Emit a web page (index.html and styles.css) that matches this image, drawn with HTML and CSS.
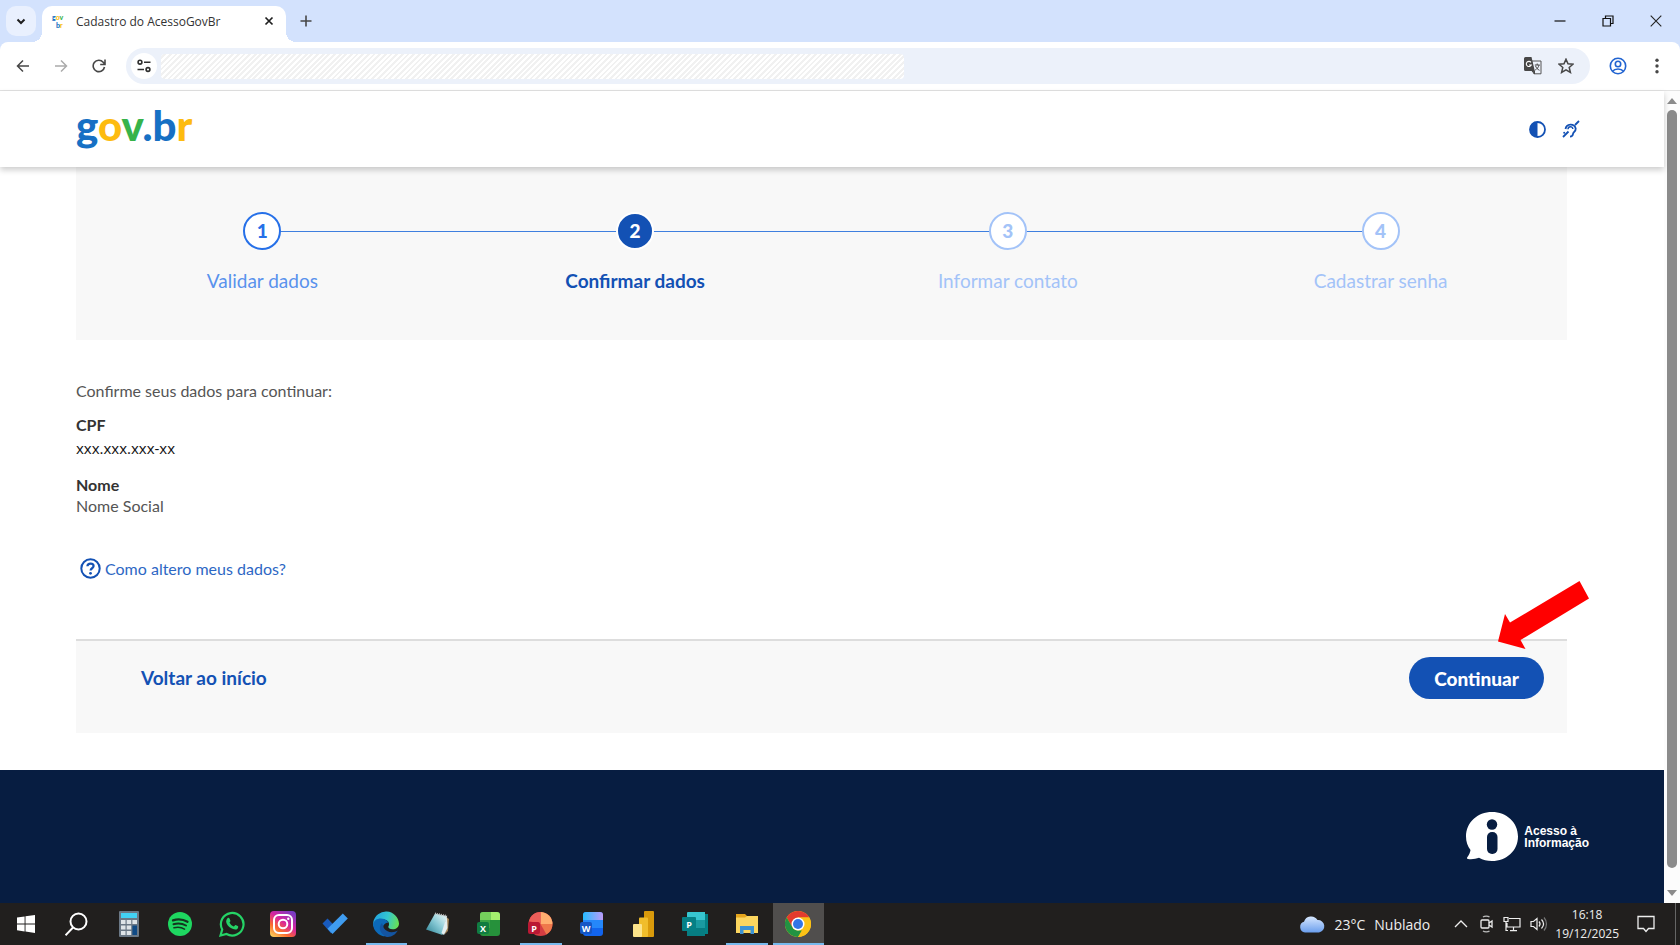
FILE: index.html
```html
<!DOCTYPE html>
<html lang="pt-BR">
<head>
  <meta charset="UTF-8">
  <meta name="viewport" content="width=device-width, initial-scale=1.0">
  <title>Cadastro do AcessoGovBr</title>
  <link rel="stylesheet" href="styles.css">
</head>
<body>
  <div class="browser">
    <div class="tab-strip">
      <button class="tab-search" aria-label="Pesquisar guias">
        <svg width="12" height="12" viewBox="0 0 12 12"><path d="M2.500 4.500 6 8l3.500-3.500" fill="none" stroke="#1f1f1f" stroke-width="2"/></svg>
      </button>
      <div class="tab">
        <svg class="favicon" width="16" height="20" viewBox="0 0 16 20" aria-hidden="true">
          <text x="1" y="9" class="fav-text"><tspan class="blue">g</tspan><tspan class="yellow">o</tspan><tspan class="green">v</tspan></text>
          <text x="5" y="17" class="fav-text"><tspan class="blue">b</tspan><tspan class="yellow">r</tspan></text>
        </svg>
        <span class="tab-title">Cadastro do AcessoGovBr</span>
        <button class="tab-close" aria-label="Fechar guia">
          <svg width="10" height="10" viewBox="0 0 10 10"><path d="M1.500 1.500l7 7M8.500 1.500l-7 7" stroke="#1f1f1f" stroke-width="1.700"/></svg>
        </button>
      </div>
      <button class="new-tab" aria-label="Nova guia">
        <svg width="12" height="12" viewBox="0 0 12 12"><path d="M6 .5v11M.5 6h11" stroke="#474747" stroke-width="1.600"/></svg>
      </button>
      <div class="window-controls">
        <button aria-label="Minimizar"><svg width="12" height="12" viewBox="0 0 12 12"><path d="M.5 6h11" stroke="#111" stroke-width="1.200"/></svg></button>
        <button aria-label="Restaurar"><svg width="12" height="12" viewBox="0 0 12 12"><path d="M1 3.500h7.500V11H1zM3.500 3.500V1H11v7.500H8.500" fill="none" stroke="#111" stroke-width="1.200"/></svg></button>
        <button aria-label="Fechar"><svg width="12" height="12" viewBox="0 0 12 12"><path d="M.7.700l10.600 10.600M11.300.700L.7 11.300" stroke="#222" stroke-width="1.100"/></svg></button>
      </div>
    </div>

    <div class="toolbar">
      <button class="nav-btn" aria-label="Voltar"><svg width="14" height="14" viewBox="0 0 14 14"><path d="M13 7H1.500M7 1.500 1.500 7 7 12.500" fill="none" stroke="#474747" stroke-width="1.500"/></svg></button>
      <button class="nav-btn" aria-label="Avançar"><svg width="14" height="14" viewBox="0 0 14 14"><path d="M1 7h11.500M7 1.500 12.500 7 7 12.500" fill="none" stroke="#ababab" stroke-width="1.500"/></svg></button>
      <button class="nav-btn" aria-label="Recarregar"><svg width="14" height="14" viewBox="0 0 14 14"><path d="M12.500 8A5.700 5.700 0 1 1 11.200 3.200L12.700 5M13 .5V5.500H8.200" fill="none" stroke="#474747" stroke-width="1.600"/></svg></button>
      <div class="omnibox">
        <button class="site-info" aria-label="Informações do site">
          <svg width="14" height="14" viewBox="0 0 14 14"><g fill="none" stroke="#303030" stroke-width="1.600"><circle cx="3" cy="3.200" r="1.900"/><path d="M7 3.200h6.500M.5 10.500H7"/><circle cx="11" cy="10.500" r="1.900"/></g></svg>
        </button>
        <input class="address" type="text" aria-label="Endereço" readonly>
        <button class="translate" aria-label="Traduzir">
          <svg width="18" height="18" viewBox="0 0 18 18">
            <path d="M7.500 4H17v12.800H10z" fill="#edf2fa" stroke="#555" stroke-width="1"/>
            <path d="M1.500 0h6l3.300 14H1.500A1.500 1.500 0 0 1 0 12.500v-11A1.500 1.500 0 0 1 1.500 0z" fill="#474747"/>
            <path d="M7 5.400A2.600 2.600 0 1 0 7.300 8H5" fill="none" stroke="#fff" stroke-width="1.100"/>
            <path d="M10.800 8h5M13.200 6.500V8M15 8c-.5 2.400-2 4-3.800 5M11.500 8.800c.7 2 2 3.500 4 4.500M8 14l2.500 3v-3z" fill="none" stroke="#474747" stroke-width="1"/>
          </svg>
        </button>
        <button class="star" aria-label="Favoritar">
          <svg width="16" height="16" viewBox="0 0 16 16"><path d="M8 1.200l2 4.600 5 .4-3.800 3.300 1.200 4.900L8 11.800l-4.400 2.600 1.200-4.900L1 6.200l5-.4z" fill="none" stroke="#474747" stroke-width="1.500"/></svg>
        </button>
      </div>
      <button class="profile" aria-label="Perfil">
        <svg width="18" height="18" viewBox="0 0 18 18"><g fill="none" stroke="#2264d1" stroke-width="1.600"><circle cx="9" cy="9" r="7.700"/><circle cx="9" cy="7" r="2.700"/><path d="M3.500 14.200c2.500-3 8.500-3 11 0"/></g></svg>
      </button>
      <button class="menu" aria-label="Menu">
        <svg width="4" height="16" viewBox="0 0 4 16" fill="#474747"><circle cx="2" cy="2.200" r="1.700"/><circle cx="2" cy="8" r="1.700"/><circle cx="2" cy="13.800" r="1.700"/></svg>
      </button>
    </div>
  </div>

  <div class="viewport">
    <div class="page">
      <header class="header">
        <a class="logo" href="#" aria-label="gov.br"><span class="blue">g</span><span class="yellow">o</span><span class="green">v</span><span class="blue">.b</span><span class="yellow">r</span></a>
        <div class="header-actions">
          <button aria-label="Alto contraste"><svg width="17" height="17" viewBox="0 0 17 17"><circle cx="8.500" cy="8.500" r="7.500" fill="#fff" stroke="#1351b4" stroke-width="1.800"/><path d="M8.500 1a7.500 7.500 0 0 0 0 15z" fill="#1351b4"/></svg></button>
          <button aria-label="Acessibilidade em Libras"><svg width="18" height="18" viewBox="0 0 18 18"><g fill="none" stroke="#1351b4" stroke-width="1.800"><path d="M1 17l5.500-5.500M13 5l4-4M3.500 9a5.200 5.200 0 0 1 10.200-.5c.2 3-2.400 3.500-2.700 5.500-.2 1.800-1.200 2.600-3 2.600"/><path d="M6 9.200c0-3.400 4.800-3.300 4.800-.3" stroke-width="1.500"/></g><circle cx="2.200" cy="12.800" r="1" fill="#1351b4"/></svg></button>
        </div>
      </header>

      <main class="content">
        <ol class="steps">
          <li class="step done"><span class="circle">1</span><span class="label">Validar dados</span></li>
          <li class="step active"><span class="circle">2</span><span class="label">Confirmar dados</span></li>
          <li class="step"><span class="circle">3</span><span class="label">Informar contato</span></li>
          <li class="step"><span class="circle">4</span><span class="label">Cadastrar senha</span></li>
        </ol>

        <div class="user-data">
          <p>Confirme seus dados para continuar:</p>
          <dl>
            <dt>CPF</dt>
            <dd class="cpf">xxx.xxx.xxx-xx</dd>
            <dt>Nome</dt>
            <dd>Nome Social</dd>
          </dl>
          <a class="help" href="#">
            <svg width="21" height="21" viewBox="0 0 21 21"><circle cx="10.500" cy="10.500" r="9.200" fill="none" stroke="#1351b4" stroke-width="2"/><path d="M7.400 8.300c.2-3.600 6.200-3.400 6.200-.2 0 2.200-3 2.100-3 4.500" fill="none" stroke="#1351b4" stroke-width="2.200"/><circle cx="10.500" cy="15.300" r="1.400" fill="#1351b4"/></svg>
            Como altero meus dados?
          </a>
        </div>

        <div class="actions">
          <a class="back-link" href="#">Voltar ao início</a>
          <button class="continue-btn">Continuar</button>
          <svg class="arrow" width="92" height="68" viewBox="0 0 92 68" aria-hidden="true"><path d="M0 60.500 7 33l5 8.500L81.500 0 91 17.500 22.500 59l5 9z" fill="#f00"/></svg>
        </div>
      </main>

      <footer class="footer">
        <a class="info-link" href="#">
          <svg width="52" height="50" viewBox="0 0 52 50"><path d="M26 0c14.500 0 26 10.500 26 24.500S40.500 49 26 49c-5 0-9-1-13-3.300-3 1.200-7 1.800-11 1.300-1-.1-1.300-1-.7-1.800C3 43 4.200 40.500 4.500 38 1.500 34 0 29.500 0 24.500 0 10.500 11.500 0 26 0z" fill="#fff"/><circle cx="26" cy="12.500" r="5.200" fill="#071d41"/><rect x="21" y="20" width="10.500" height="22" rx="5" fill="#071d41"/></svg>
          <span>Acesso à<br>Informação</span>
        </a>
      </footer>
    </div>
    <div class="scrollbar">
      <svg width="10" height="6" viewBox="0 0 10 6"><path d="M5 0l5 6H0z" fill="#8b8b8b"/></svg>
      <div class="thumb"></div>
      <svg width="10" height="6" viewBox="0 0 10 6"><path d="M5 6l5-6H0z" fill="#8b8b8b"/></svg>
    </div>
  </div>

  <div class="taskbar">
    <div class="apps">
      <button class="app" aria-label="Iniciar"><svg width="18" height="18" viewBox="0 0 18 18" fill="#fff"><path d="M0 2.600 7.600 1.500v7H0zM8.500 1.300 18 0v8.500H8.500zM0 9.400h7.600v7L0 15.300zM8.500 9.400H18V18l-9.500-1.400z"/></svg></button>
      <button class="app" aria-label="Pesquisar"><svg width="24" height="24" viewBox="0 0 24 24"><g fill="none" stroke="#fff" stroke-width="2"><circle cx="13.500" cy="9.500" r="8"/><path d="M8 15.500.5 23.300"/></g></svg></button>
      <button class="app" aria-label="Calculadora"><svg width="20" height="26" viewBox="0 0 20 26"><rect width="20" height="26" rx="1" fill="#6b7886"/><rect x="2" y="2" width="16" height="5" fill="#42d2f5"/><g fill="#dfe4e8"><path d="M2 9h4.500v4H2zM7.700 9h4.500v4H7.700zM13.400 9H18v4h-4.600zM2 14.500h4.500v4H2zM7.700 14.500h4.500v4H7.700zM2 20h4.500v4H2zM7.700 20h4.500v4H7.700z"/></g><path d="M13.400 14.500H18V24h-4.600z" fill="#104a85"/></svg></button>
      <button class="app" aria-label="Spotify"><svg width="24" height="24" viewBox="0 0 24 24"><circle cx="12" cy="12" r="12" fill="#1ed760"/><g fill="none" stroke="#14351f" stroke-linecap="round"><path d="M5 8.300c5-1.500 10.500-.8 14.500 1.500" stroke-width="2.300"/><path d="M5.500 12.200c4.500-1.300 9-.7 12.500 1.300" stroke-width="2"/><path d="M6 15.800c4-1 7.500-.5 10.500 1.300" stroke-width="1.600"/></g></svg></button>
      <button class="app" aria-label="WhatsApp"><svg width="26" height="26" viewBox="0 0 26 26"><path d="M1.500 24.500 3.200 18.500A11.300 11.300 0 1 1 7.500 23z" fill="#1f1f1c" stroke="#25d366" stroke-width="2.200"/><path d="M8.500 7.200c1-.8 1.800-.4 2.200.8l.7 1.700c.2.600-.8 1.400-.9 1.900.9 1.900 2.300 3.200 4.200 3.900.7-.3 1.200-1.600 1.900-1.500l2.200 1.100c.9.500.3 1.900-.3 2.600-1.500 1.500-4.300.8-6.600-.6-2.200-1.400-4.400-3.900-4.700-6.200-.1-1.400.4-2.900 1.300-3.700z" fill="#25d366"/></svg></button>
      <button class="app" aria-label="Instagram"><svg width="26" height="26" viewBox="0 0 26 26"><defs><linearGradient id="insta" x1=".1" y1="1" x2=".8" y2="0"><stop offset="0" stop-color="#ffd35b"/><stop offset=".3" stop-color="#fb6b2d"/><stop offset=".6" stop-color="#d6249f"/><stop offset="1" stop-color="#793cc4"/></linearGradient></defs><rect width="26" height="26" rx="4" fill="url(#insta)"/><g fill="none" stroke="#fff" stroke-width="2"><rect x="4" y="4" width="18" height="18" rx="5"/><circle cx="13" cy="13" r="4.300"/></g><circle cx="18.300" cy="7.800" r="1.200" fill="#fff"/></svg></button>
      <button class="app" aria-label="To Do"><svg width="26" height="22" viewBox="0 0 26 22"><path d="M.5 10.500 5.500 5.500l8.500 8.800-5 6z" fill="#185abd"/><path d="M5.500 15.800 20.800.5l5 5L10.500 21z" fill="#3f9cf0"/></svg></button>
      <button class="app running" aria-label="Edge"><svg width="26" height="26" viewBox="0 0 26 26"><defs><linearGradient id="edge" x1="0" y1=".5" x2="1" y2=".7"><stop offset="0" stop-color="#22a5e0"/><stop offset=".5" stop-color="#34c6cf"/><stop offset="1" stop-color="#6be04c"/></linearGradient></defs><path d="M.3 11A13 13 0 0 1 26 12.500c0 3.800-3 5.800-6.300 5.800-3.300 0-4.700-1.300-4.300-2.700 1.800-3.200-.3-7-5.200-7C5.500 8.600 2 11 .3 16z" fill="url(#edge)"/><path d="M.1 14.500C.5 7.500 7 6.500 11.200 8c2 .8 3.500 2 4.200 3.500-4 .3-6 3.200-5.200 6.500 1 4.300 5.500 6.300 9.500 5.400A13 13 0 0 1 .1 14.500z" fill="#0c69b8"/><path d="M9 12c-4.500 4.500-1.500 11.500 4.800 14 5 .2 8.700-2.400 11-6.500-5 3-11.500 1.800-14-2.500z" fill="#1454a0"/></svg></button>
      <button class="app" aria-label="Bloco de notas"><svg width="26" height="24" viewBox="0 0 26 24"><defs><linearGradient id="note" x1="1" y1="0" x2="0" y2="1"><stop offset="0" stop-color="#f4fbfc"/><stop offset=".5" stop-color="#84c7d3"/><stop offset="1" stop-color="#297f91"/></linearGradient></defs><path d="M21 5l3 2-1 12-3 3z" fill="#a18054"/><path d="M10 1.500 22 4l-4.500 19L1 17.500z" fill="url(#note)"/><path d="M22 4l-5.500 17 2.500 2 3.500-7z" fill="#e4eef0"/><path d="M10 1.500 22 4" stroke="#bbb" stroke-width="2" stroke-dasharray="1 1"/></svg></button>
      <button class="app" aria-label="Excel"><svg width="24" height="24" viewBox="0 0 24 24"><rect x="3" width="20" height="24" rx="3" fill="#26913b"/><path d="M6 0h8v8H3V3a3 3 0 0 1 3-3z" fill="#75cf5c"/><path d="M14 0h6a3 3 0 0 1 3 3v5h-9z" fill="#a4f06f"/><path d="M3 8h10v8H3z" fill="#39a346"/><rect x="0" y="10" width="12" height="12" rx="2" fill="#107c41"/><text x="6" y="19.500" class="app-letter">X</text></svg></button>
      <button class="app running" aria-label="PowerPoint"><svg width="26" height="24" viewBox="0 0 26 24"><circle cx="12.500" cy="12" r="12" fill="#d53d42"/><path d="M12.500 0a12 12 0 0 1 12 12h-12z" fill="#ffae70"/><path d="M24.500 12a12 12 0 0 1-6 10.400L12.500 12z" fill="#ef784b"/><path d="M1 9C3 3 7 0 12.500 0v12z" fill="#ec5e59"/><rect x="0" y="10" width="12" height="12" rx="2" fill="#ba1834"/><text x="6" y="19.500" class="app-letter">P</text></svg></button>
      <button class="app" aria-label="Word"><svg width="24" height="24" viewBox="0 0 24 24"><defs><linearGradient id="word"><stop offset="0" stop-color="#25bcff"/><stop offset="1" stop-color="#bd9bf7"/></linearGradient></defs><rect x="3" width="20" height="24" rx="3" fill="#1264ee"/><path d="M6 0h14a3 3 0 0 1 3 3v5H3V3a3 3 0 0 1 3-3z" fill="url(#word)"/><path d="M3 8h20v8H3z" fill="#2587fa"/><rect x="0" y="10" width="12" height="12" rx="2" fill="#1556c5"/><text x="6" y="19.500" class="app-letter">W</text></svg></button>
      <button class="app" aria-label="Power BI"><svg width="22" height="26" viewBox="0 0 22 26"><rect x="11" y="0" width="10" height="26" rx="1" fill="#d99a0b"/><rect x="6" y="6.500" width="9" height="19.500" rx="1" fill="#f0bd2b"/><rect x="0" y="13" width="9" height="13" rx="1" fill="#fce38a"/></svg></button>
      <button class="app" aria-label="Publisher"><svg width="26" height="24" viewBox="0 0 26 24"><path d="M20 2h6v20h-6z" fill="#038387"/><rect x="5" width="18" height="24" rx="1" fill="#1a9ba1"/><path d="M6 0h17v8H5V1z" fill="#37c6d0"/><path d="M5 16h18v8H5z" fill="#077d82"/><rect x="0" y="5" width="14" height="14" rx="1" fill="#058085"/><text x="7" y="15.500" class="app-letter">P</text></svg></button>
      <button class="app running" aria-label="Explorador de arquivos"><svg width="24" height="22" viewBox="0 0 24 22"><path d="M1 1h9l2 2h11v17H1z" fill="#e5a51d"/><path d="M1 4.500h9L12 3h11v17H1z" fill="#fcd65f"/><path d="M5 13h14v8h-3.500v-4h-7v4H5z" fill="#3d93d3"/></svg></button>
      <button class="app running current" aria-label="Chrome"><svg width="26" height="26" viewBox="0 0 26 26"><circle cx="13" cy="13" r="13" fill="#fbc116"/><path d="M1.740 6.500A13 13 0 0 1 24.260 6.500H13L7.400 16.200z" fill="#e33b2e"/><path d="M1.740 6.500 7.400 16.200A6.500 6.500 0 0 0 13 19.500h5.600L13 26A13 13 0 0 1 1.740 6.500z" fill="#229342"/><path d="M18.600 16.200 13 26A13 13 0 0 0 24.260 6.500H13z" fill="#fbc116"/><circle cx="13" cy="13" r="6.500" fill="#fff"/><circle cx="13" cy="13" r="5" fill="#3375e6"/></svg></button>
    </div>

    <div class="tray">
      <button class="weather">
        <svg width="26" height="18" viewBox="0 0 26 18"><defs><linearGradient id="cloud" x1="0" y1="0" x2="0" y2="1"><stop offset="0" stop-color="#d6e7ff"/><stop offset="1" stop-color="#6b9eed"/></linearGradient></defs><path d="M6 17.500a5.500 5.500 0 0 1-1-10.700A7.500 7.500 0 0 1 18.500 5 6.300 6.300 0 0 1 20 17.500z" fill="url(#cloud)"/></svg>
        <span>23°C</span><span>Nublado</span>
      </button>
      <div class="status">
        <button class="show-hidden" aria-label="Mostrar ícones ocultos"><svg width="14" height="8" viewBox="0 0 14 8"><path d="M1 7l6-6 6 6" fill="none" stroke="#eee" stroke-width="1.300"/></svg></button>
        <button aria-label="Reunir agora"><svg width="14" height="18" viewBox="0 0 14 18"><g fill="none" stroke="#eee" stroke-width="1.300"><rect x="1" y="5" width="8" height="8" rx="1"/><path d="M9 8l3-2v6l-3-2"/><path d="M3 2c1.500-1.200 5-1.200 6.500 0M3 16c1.500 1.200 5 1.200 6.500 0" stroke="#bbb"/></g></svg></button>
        <button aria-label="Rede"><svg width="18" height="16" viewBox="0 0 18 16"><path d="M6 2.500h11v8.500H4V7M10.500 11v3.500M7 14.700h7M1 1.500h4v4H1zM3 5.500v9h2" fill="none" stroke="#eee" stroke-width="1.200"/></svg></button>
        <button aria-label="Volume"><svg width="18" height="16" viewBox="0 0 18 16"><g fill="none" stroke="#eee" stroke-width="1.200"><path d="M1 5.500h2.500L7 2.500v11l-3.500-3H1zM9 5.500c1.300 1.500 1.300 3.500 0 5M11.500 3.500c2.500 2.700 2.500 6.300 0 9"/><path d="M14 1.500c3.300 3.700 3.300 9.300 0 13" stroke="#777"/></g></svg></button>
      </div>
      <time class="clock" datetime="2025-12-19T16:18">16:18<br>19/12/2025</time>
      <button class="notifications" aria-label="Notificações"><svg width="18" height="18" viewBox="0 0 18 18"><path d="M1 1.500h16v12h-5.500L9 16.500l-2.500-3H1z" fill="none" stroke="#eee" stroke-width="1.300"/></svg></button>
    </div>
  </div>
</body>
</html>
```
FILE: styles.css
```css
* {
  box-sizing: border-box;
}
body {
  margin: 0;
  height: 100vh;
  display: flex;
  flex-direction: column;
  font-family: Lato, 'Open Sans', sans-serif;
  background-color: white;
  color: #555;
  overflow: hidden;
}
button {
  display: flex;
  align-items: center;
  justify-content: center;
  padding: 0;
  border: none;
  background: none;
  font-family: inherit;
  color: inherit;
  cursor: pointer;
}
a {
  color: #1351b4;
  text-decoration: none;
}
svg {
  flex-shrink: 0;
}
.blue {
  color: #1670c4;
  fill: #1670c4;
}
.yellow {
  color: #fdbb0f;
  fill: #fdbb0f;
}
.green {
  color: #36b34a;
  fill: #36b34a;
}

/* navegador */
.browser {
  background-color: #d3e2fd;
}
.tab-strip {
  display: flex;
  height: 42px;
  padding-left: 6px;
}
.tab-search {
  width: 30px;
  height: 30px;
  margin: 6px 6px 0 0;
  border-radius: 10px;
  background-color: #e9f0fe;
}
.tab {
  position: relative;
  display: flex;
  align-items: center;
  width: 244px;
  margin-top: 6px;
  padding: 0 10px 6px 9px;
  border-radius: 10px 10px 0 0;
  background-color: white;
}
.tab::before,
.tab::after {
  content: '';
  position: absolute;
  bottom: 0;
  width: 10px;
  height: 10px;
}
.tab::before {
  left: -10px;
  background: radial-gradient(circle at 0 0, transparent 10px, white 10px);
}
.tab::after {
  right: -10px;
  background: radial-gradient(circle at 100% 0, transparent 10px, white 10px);
}
.favicon {
  margin-right: 9px;
}
.fav-text {
  font: 900 7px Lato, sans-serif;
}
.tab-title {
  flex: 1;
  font-family: 'Open Sans', sans-serif;
  font-size: 12px;
  color: #333;
  white-space: nowrap;
}
.tab-close {
  width: 14px;
  height: 14px;
}
.new-tab {
  width: 40px;
}
.window-controls {
  display: flex;
  margin-left: auto;
}
.window-controls button {
  width: 48px;
}
.toolbar {
  display: flex;
  align-items: center;
  height: 49px;
  padding: 0 19px 0 4px;
  border-bottom: 1px solid #e2e2e2;
  border-radius: 8px 8px 0 0;
  background-color: white;
}
.nav-btn {
  width: 38px;
  height: 36px;
}
.omnibox {
  flex: 1;
  display: flex;
  align-items: center;
  height: 36px;
  margin-left: 8px;
  padding: 0 16px 0 5px;
  border-radius: 18px;
  background-color: #ecf1fa;
}
.site-info {
  width: 26px;
  height: 26px;
  border-radius: 50%;
  background-color: white;
}
.address {
  width: 51.5%;
  height: 25px;
  margin-left: 4px;
  border: none;
  border-radius: 4px;
  background: repeating-linear-gradient(135deg, #fff 0 2px, #f1f1f1 2px 4px);
}
.translate {
  margin-left: auto;
}
.star {
  margin-left: 16px;
}
.profile {
  margin: 0 26px 0 19px;
}
.menu {
  width: 8px;
}
.viewport {
  flex: 1;
  display: flex;
  min-height: 0;
}
.page {
  flex: 1;
  display: flex;
  flex-direction: column;
}
.scrollbar {
  display: flex;
  flex-direction: column;
  align-items: center;
  width: 16px;
  padding: 7px 0;
  background-color: #fcfcfc;
}
.thumb {
  flex: 1;
  width: 10px;
  margin: 6px 0 22px;
  border-radius: 5px;
  background-color: #8b8b8b;
}

/* cabeçalho */
.header {
  position: relative;
  display: flex;
  justify-content: space-between;
  align-items: center;
  height: 76px;
  padding: 0 84px 0 76px;
  background-color: white;
  box-shadow: 0 3px 6px rgba(0, 0, 0, 0.2);
}
.logo {
  padding-bottom: 8px;
  font-size: 42px;
  font-weight: 900;
  line-height: 42px;
}
.header-actions {
  display: flex;
  gap: 16px;
}

/* etapas */
.content {
  padding: 0 97px 0 76px;
}
.steps {
  display: grid;
  grid-template-columns: repeat(4, 1fr);
  margin: 0;
  padding: 45px 0 47px;
  list-style: none;
  background-color: #f8f8f8;
}
.step {
  position: relative;
  display: flex;
  flex-direction: column;
  align-items: center;
  color: #a3c3f8;
}
.step + .step::before {
  content: '';
  position: absolute;
  top: 19px;
  left: -50%;
  width: 100%;
  height: 1px;
  background-color: #3f7fdf;
}
.circle {
  z-index: 1;
  width: 38px;
  height: 38px;
  border: 2px solid #a3c3f8;
  border-radius: 50%;
  background-color: white;
  font-size: 19px;
  font-weight: 900;
  line-height: 34px;
  text-align: center;
}
.label {
  margin-top: 19px;
  font-size: 19px;
  line-height: 24px;
}
.done {
  color: #5992ed;
}
.done .circle {
  border-color: #2670e8;
  color: #2670e8;
}
.active {
  color: #1351b4;
  font-weight: 700;
}
.active .circle {
  border-color: white;
  background-color: #1351b4;
  color: white;
}

/* dados */
.user-data {
  padding: 40px 0 60px;
  font-size: 16px;
  line-height: 21px;
}
.user-data p,
.user-data dl,
.user-data dd {
  margin: 0;
}
.user-data dt {
  margin-top: 13px;
  font-weight: 700;
  color: #333;
}
.user-data .cpf {
  font-family: 'Open Sans', sans-serif;
  font-size: 15px;
  line-height: 26px;
  color: #111;
}
.help {
  display: flex;
  align-items: center;
  gap: 4px;
  margin: 42px 0 0 4px;
  color: #2d67c4;
}
.actions {
  position: relative;
  display: flex;
  justify-content: space-between;
  align-items: flex-start;
  padding: 16px 23px 34px 65px;
  border-top: 2px solid #ddd;
  background-color: #f8f8f8;
}
.back-link {
  font-size: 19px;
  font-weight: 700;
  line-height: 42px;
}
.continue-btn {
  height: 42px;
  padding: 0 25px;
  border-radius: 21px;
  background-color: #1351b4;
  color: white;
  font-size: 19px;
  font-weight: 900;
}
.arrow {
  position: absolute;
  top: -60px;
  right: -23px;
}

/* rodapé */
.footer {
  flex: 1;
  display: flex;
  justify-content: flex-end;
  align-items: center;
  margin-top: 37px;
  padding-right: 75px;
  background-color: #071d41;
}
.info-link {
  display: flex;
  align-items: center;
  gap: 6px;
  color: white;
  font-family: 'Liberation Sans', Arial, sans-serif;
  font-size: 12px;
  font-weight: 700;
  line-height: 12px;
}

/* barra de tarefas */
.taskbar {
  display: flex;
  justify-content: space-between;
  height: 42px;
  background-color: #211f1e;
  color: #eee;
  font-family: 'Open Sans', sans-serif;
}
.apps {
  display: grid;
  grid-template-columns: repeat(16, 1fr);
  width: 824px;
}
.app {
  position: relative;
}
.running::after {
  content: '';
  position: absolute;
  right: 5px;
  bottom: 0;
  left: 5px;
  height: 2px;
  background-color: #76b9ed;
}
.current {
  background-color: #504e4d;
}
.current::after {
  right: 0;
  left: 0;
}
.app-letter {
  font: 700 9px 'Open Sans', sans-serif;
  text-anchor: middle;
  fill: white;
}
.tray {
  display: flex;
  align-items: center;
  margin-right: 4px;
  padding-right: 20px;
  border-right: 1px solid #666;
}
.weather {
  gap: 9px;
  margin-right: 24px;
  font-size: 14px;
}
.status {
  display: flex;
  gap: 9px;
}
.show-hidden {
  margin-right: 3px;
}
.clock {
  margin: 0 18px 0 7px;
  font-size: 12px;
  line-height: 19px;
  text-align: center;
}
```
